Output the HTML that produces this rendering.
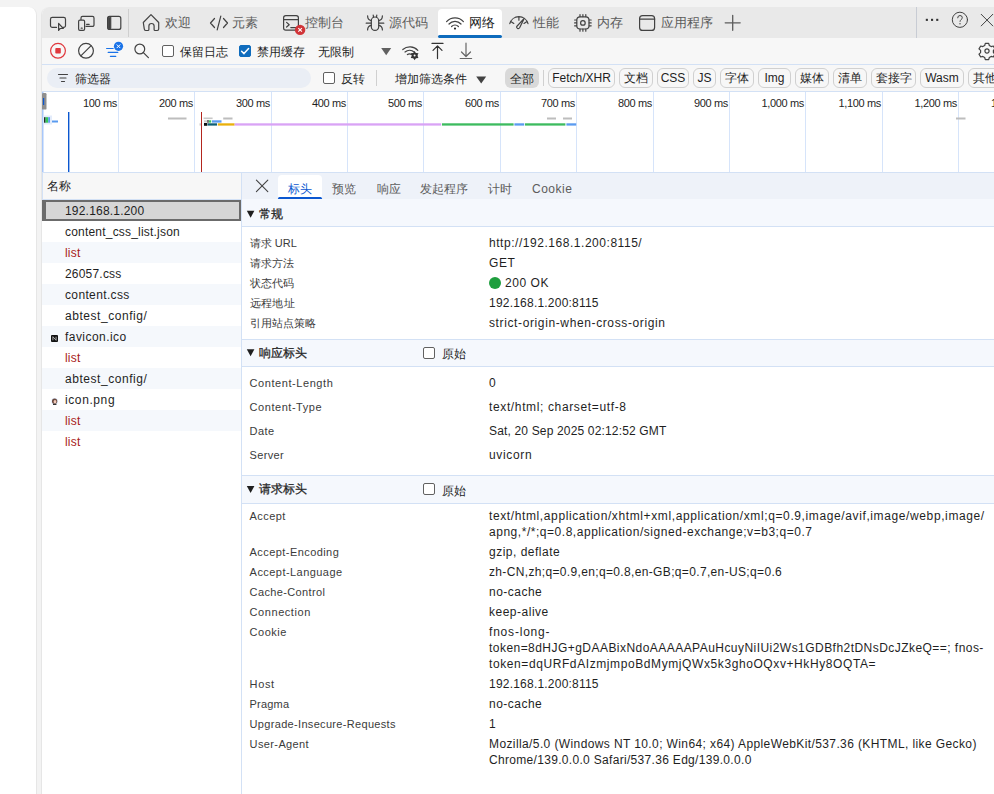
<!DOCTYPE html>
<html><head><meta charset="utf-8">
<style>
*{box-sizing:border-box;margin:0;padding:0}
html,body{width:994px;height:794px;overflow:hidden;background:#f3f3f3;font-family:"Liberation Sans",sans-serif;font-size:12px;color:#1f1f1f;position:relative}
.a{position:absolute}
.t{position:absolute;white-space:nowrap;line-height:14px}
svg{position:absolute;overflow:visible}
.tab{color:#5c5c5c;font-size:13px}
.chip{position:absolute;top:68px;height:20px;border:1px solid #d0d0d0;border-radius:6px;line-height:18px;text-align:center;color:#1f1f1f;font-size:12px}
.cb{position:absolute;width:12px;height:12px;border:1px solid #616161;border-radius:2px;background:#fff}
.gl{position:absolute;top:92px;width:1px;height:80px;background:#d6e4fa}
.ms{position:absolute;top:97px;font-size:11px;letter-spacing:-.35px;text-align:right;width:60px;color:#1f1f1f;line-height:12px}
.row{position:absolute;left:42px;width:199px;height:21px}
.row.e{background:#f5f8fc}
.rn{position:absolute;left:23px;top:4px;white-space:nowrap;line-height:14px;letter-spacing:.2px}
.red{color:#a8201a}
.lbl{position:absolute;left:249.6px;font-size:11px;color:#3b3b3b;white-space:nowrap;letter-spacing:.45px;line-height:14px}
.val{position:absolute;left:489px;color:#1f1f1f;white-space:nowrap;letter-spacing:.55px;line-height:16px}
.sec{position:absolute;left:242px;width:752px;background:#f5f8fd;border-top:1px solid #d3e1f5;border-bottom:1px solid #d3e1f5}
</style></head><body>
<!-- panels -->
<div class="a" style="left:0;top:7px;width:37px;height:790px;background:#fff;border-top-right-radius:8px;border-right:1px solid #e6e6e6"></div>
<div class="a" style="left:41px;top:7px;width:960px;height:790px;background:#fff;border-top-left-radius:8px;border-left:1px solid #e6e6e6;overflow:hidden">
  <div class="a" style="left:0;top:0;width:960px;height:31px;background:#e9e9e9"></div>
  <div class="a" style="left:0;top:31px;width:960px;height:27px;background:#f7f7f7;border-bottom:1px solid #d3e1f5"></div>
  <div class="a" style="left:0;top:58px;width:960px;height:27px;background:#f7f7f7;border-bottom:1px solid #d3e1f5"></div>
  <div class="a" style="left:0;top:85px;width:960px;height:81px;background:#fff;border-bottom:1px solid #d3e1f5"></div>
  <div class="a" style="left:0;top:166px;width:200px;height:27px;background:#f7f7f7;border-bottom:1px solid #d3e1f5"></div>
  <div class="a" style="left:200px;top:166px;width:760px;height:27px;background:#eef2f9;border-bottom:1px solid #d3e1f5"></div>
</div>
<div class="a" style="left:241px;top:172px;width:1px;height:630px;background:#d3e1f5"></div>

<!-- tabbar -->
<div class="a" style="left:438px;top:9px;width:64px;height:29px;background:#fff;border-radius:4px 4px 0 0"></div>
<svg style="left:0;top:0" width="994" height="40" fill="none" stroke="#424242" stroke-width="1.2" stroke-linecap="round" stroke-linejoin="round">
  <path d="M56.5 27.4H52.3a1.8 1.8 0 0 1-1.8-1.8V19.2a1.8 1.8 0 0 1 1.8-1.8h11.4a1.8 1.8 0 0 1 1.8 1.8v6.4a1.8 1.8 0 0 1-1.8 1.8H63"/>
  <path d="M58.6 23.4v7l1.6-1.9h3.1z"/>
  <path d="M81 19.5v-1.6a1.5 1.5 0 0 1 1.5-1.5h10a1.5 1.5 0 0 1 1.5 1.5v7a1.5 1.5 0 0 1-1.5 1.5h-6.5"/>
  <rect x="78.6" y="20.2" width="6" height="10.2" rx="1.3"/>
  <path d="M81.2 28.2h1"/><path d="M86.6 24.3h2.6"/>
  <rect x="107.6" y="16.4" width="13.2" height="13" rx="2"/>
  <path d="M108.2 17.2v11.4h2.6V17.2z" fill="#424242" stroke-width="1"/>
  <path d="M143.3 22.5L151 14.6l7.7 7.9v6.6a1.4 1.4 0 0 1-1.4 1.4h-2.2a1 1 0 0 1-1-1v-3.4a2.6 2.6 0 0 0-5.2 0v3.4a1 1 0 0 1-1 1h-2.2a1.4 1.4 0 0 1-1.4-1.4z"/>
  <path d="M214.5 18.5l-4 4.5 4 4.5M223.5 18.5l4 4.5-4 4.5M220.8 16.2l-3.6 13.6"/>
  <rect x="283.6" y="15.6" width="14.8" height="14.6" rx="2.2"/>
  <path d="M283.6 19.6h14.8"/>
  <path d="M286.6 22.4l2.6 2.3-2.6 2.3M290.8 27.6h5"/>
  <!-- bug -->
  <rect x="371.3" y="17" width="7.4" height="13.4" rx="3.7"/>
  <path d="M373.5 17.2l-.3-2.2M376.5 17.2l.3-2.2M371.2 20.6c-2.4-.4-3.6-2-3.6-4.8M378.8 20.6c2.4-.4 3.6-2 3.6-4.8M371 23.2h-4.8M379 23.2h4.8M371.2 25.4c-2.4.4-3.6 2-3.6 4.6M378.8 25.4c2.4.4 3.6 2 3.6 4.6"/>
  <!-- wifi -->
  <path d="M446.6 21.6a11.5 11.5 0 0 1 16.8 0M449 24a8 8 0 0 1 12 0M451.6 26.5a4.6 4.6 0 0 1 6.8 0"/>
  <circle cx="455" cy="28.6" r="1.1" fill="#242424" stroke="none"/>
  <!-- perf -->
  <path d="M509.8 23.6A9.45 9.45 0 0 1 528 23.6M510.8 21.4l3 2M518.9 16.6v3.6M527 21.4l-3 2"/>
  <path d="M524.2 18.4l-4.6 9.4a1.6 1.6 0 0 1-2.9-1.3z"/>
  <!-- memory -->
  <rect x="576.8" y="16.8" width="12.2" height="12.2" rx="3.2"/>
  <circle cx="582.9" cy="22.9" r="2.3"/>
  <path d="M580 14.6v2M582.9 14.6v2M585.8 14.6v2M580 29.2v2M582.9 29.2v2M585.8 29.2v2M574.6 20h2M574.6 22.9h2M574.6 25.8h2M589.2 20h2M589.2 22.9h2M589.2 25.8h2"/>
  <!-- app -->
  <rect x="639.6" y="15.6" width="15" height="14.8" rx="3"/>
  <path d="M639.6 19.2h15"/>
  <path d="M725.2 22.8h15M732.7 15.3v15" stroke="#5c5c5c" stroke-width="1.3"/>
  <!-- right -->
  <rect x="925.8" y="18.8" width="2.1" height="2.1" fill="#333" stroke="none"/><rect x="931" y="18.8" width="2.1" height="2.1" fill="#333" stroke="none"/><rect x="936.2" y="18.8" width="2.1" height="2.1" fill="#333" stroke="none"/>
  <circle cx="959.9" cy="19.8" r="7.6" stroke-width="1"/>
  <path d="M957.7 17.8a2.3 2.3 0 0 1 4.6 0c0 1.6-2.3 1.8-2.3 3.6" stroke-width="1"/><circle cx="960" cy="23.7" r=".7" fill="#424242" stroke="none"/>
  <path d="M981.2 14.3l11.6 11.6M992.8 14.3l-11.6 11.6" stroke-width="1"/>
</svg>
<div class="a" style="left:128px;top:9px;width:1px;height:28px;background:#cfcfcf"></div>
<div class="a" style="left:916px;top:7px;width:1px;height:31px;background:#c8ccd4"></div>
<div class="a" style="left:438px;top:35px;width:64px;height:3px;background:#0f6cbd;border-radius:2px"></div>
<div class="t tab" style="top:16px;left:165px">欢迎</div>
<div class="t tab" style="top:16px;left:232px">元素</div>
<div class="t tab" style="top:16px;left:305px">控制台</div>
<div class="t tab" style="top:16px;left:389px">源代码</div>
<div class="t tab" style="top:16px;left:469px;color:#1f1f1f">网络</div>
<div class="t tab" style="top:16px;left:533px">性能</div>
<div class="t tab" style="top:16px;left:597px">内存</div>
<div class="t tab" style="top:16px;left:661px">应用程序</div>
<svg style="left:0;top:0" width="320" height="40"><circle cx="300.1" cy="29.9" r="5.2" fill="#d13438"/><path d="M298.3 28.1l3.6 3.6M301.9 28.1l-3.6 3.6" stroke="#fff" stroke-width="1.1"/></svg>

<!-- toolbar row1 -->
<svg style="left:0;top:0" width="994" height="100" fill="none" stroke="#424242" stroke-width="1.2" stroke-linecap="round" stroke-linejoin="round">
  <circle cx="58" cy="50.8" r="7.4" stroke="#e0393e"/>
  <rect x="55.3" y="48.1" width="5.5" height="5.5" rx=".8" fill="#e0393e" stroke="none"/>
  <circle cx="86" cy="50.8" r="7.4"/>
  <path d="M90.9 45.9l-9.8 9.8"/>
  <path d="M106.6 48.5h6.6M108.2 52.4h9.6M110.4 56.3h5.4" stroke="#1a73e8"/>
  <circle cx="118.5" cy="46.3" r="4.6" fill="#1a73e8" stroke="none"/>
  <path d="M117 44.8l3 3M120 44.8l-3 3" stroke="#fff" stroke-width="1"/>
  <circle cx="139.8" cy="49" r="4.9"/>
  <path d="M143.4 52.6l5 5"/>
  <path d="M381.2 48h10l-5 7.2z" fill="#616161" stroke="none"/>
  <path d="M402.8 49.5a11 11 0 0 1 15 .8M405 52a7.4 7.4 0 0 1 9.4.2M407.4 54.6a3.6 3.6 0 0 1 4-.2" stroke="#424242"/>
  <path d="M432 43.4h11M437.5 46v12.6M433 50.3l4.5-4.5 4.5 4.5" stroke="#333"/>
  <path d="M460.2 58.5h11.4M466 43.2v13M461.5 52l4.5 4.5 4.5-4.5" stroke="#666"/>
  <g transform="translate(987 51)"><path d="M-1.7-7.6h3.4l.6 2.1 1.9 1.1 2.1-.6 1.7 2.9-1.6 1.5v2.2l1.6 1.5-1.7 2.9-2.1-.6-1.9 1.1-.6 2.1h-3.4l-.6-2.1-1.9-1.1-2.1.6-1.7-2.9 1.6-1.5v-2.2l-1.6-1.5 1.7-2.9 2.1.6 1.9-1.1z"/><circle r="2.1"/></g>
</svg>
<svg style="left:0;top:0" width="994" height="100"><g transform="translate(414.6 55.6)"><circle r="2.9" fill="#333"/><path d="M0-4.6L1.2-2.6 3.9-2.3 2.6 0 3.9 2.3 1.2 2.6 0 4.6-1.2 2.6-3.9 2.3-2.6 0-3.9-2.3-1.2-2.6z" fill="#333"/><circle r="1" fill="#f7f7f7"/></g></svg>
<div class="cb" style="left:162px;top:45px"></div>
<div class="t" style="left:180px;top:45px;color:#1f1f1f">保留日志</div>
<div class="cb" style="left:239px;top:45px;background:#0f6cbd;border-color:#0f6cbd"></div>
<svg style="left:0;top:0" width="300" height="70"><path d="M241.6 51.2l2.4 2.4 4.6-5" fill="none" stroke="#fff" stroke-width="1.5" stroke-linecap="round" stroke-linejoin="round"/></svg>
<div class="t" style="left:257px;top:45px;color:#1f1f1f">禁用缓存</div>
<div class="t" style="left:318px;top:45px;color:#1f1f1f">无限制</div>
<!-- filter row -->
<div class="a" style="left:47px;top:68px;width:264px;height:20px;background:#eaeef5;border-radius:10px"></div>
<svg style="left:0;top:0" width="994" height="100" fill="none" stroke="#424242" stroke-width="1.2" stroke-linecap="round">
  <path d="M58.5 74.5h9M60 78h6M61.5 81.5h3"/>
  <path d="M476.2 76.4h10l-5 7.2z" fill="#424242" stroke="none"/>
</svg>
<div class="t" style="left:75px;top:72px;color:#1f1f1f">筛选器</div>
<div class="cb" style="left:323px;top:72px"></div>
<div class="t" style="left:341px;top:72px;color:#1f1f1f">反转</div>
<div class="a" style="left:376px;top:70px;width:1px;height:16px;background:#d0d0d0"></div>
<div class="t" style="left:395px;top:72px;color:#1f1f1f">增加筛选条件</div>
<div class="a" style="left:505px;top:68px;width:34px;height:20px;background:#d9d9d9;border-radius:6px"></div>
<div class="t" style="left:510px;top:72px;color:#1f1f1f">全部</div>
<div class="a" style="left:543px;top:70px;width:1px;height:16px;background:#d0d0d0"></div>
<div class="chip" style="left:548px;width:67px">Fetch/XHR</div>
<div class="chip" style="left:619px;width:34px">文档</div>
<div class="chip" style="left:657px;width:32px">CSS</div>
<div class="chip" style="left:693px;width:23px">JS</div>
<div class="chip" style="left:720px;width:34px">字体</div>
<div class="chip" style="left:758px;width:33px">Img</div>
<div class="chip" style="left:795px;width:34px">媒体</div>
<div class="chip" style="left:833px;width:34px">清单</div>
<div class="chip" style="left:871px;width:45px">套接字</div>
<div class="chip" style="left:920px;width:44px">Wasm</div>
<div class="chip" style="left:968px;width:34px;text-align:left;padding-left:4px">其他</div>

<!-- overview -->
<div class="gl" style="left:118px"></div><div class="gl" style="left:194px"></div><div class="gl" style="left:271px"></div><div class="gl" style="left:347px"></div><div class="gl" style="left:423px"></div><div class="gl" style="left:500px"></div><div class="gl" style="left:576px"></div><div class="gl" style="left:653px"></div><div class="gl" style="left:729px"></div><div class="gl" style="left:805px"></div><div class="gl" style="left:882px"></div><div class="gl" style="left:958px"></div>
<div class="ms" style="left:57px">100 ms</div><div class="ms" style="left:133px">200 ms</div><div class="ms" style="left:210px">300 ms</div><div class="ms" style="left:286px">400 ms</div><div class="ms" style="left:362px">500 ms</div><div class="ms" style="left:439px">600 ms</div><div class="ms" style="left:515px">700 ms</div><div class="ms" style="left:592px">800 ms</div><div class="ms" style="left:668px">900 ms</div><div class="ms" style="left:744px">1,000 ms</div><div class="ms" style="left:821px">1,100 ms</div><div class="ms" style="left:897px">1,200 ms</div><div class="ms" style="left:991px;text-align:left">1,300 ms</div>
<svg style="left:0;top:0" width="994" height="180">
  <rect x="42" y="92" width="1.5" height="80" fill="#a8c7fa"/>
  <rect x="42" y="93" width="4.5" height="16.6" rx="1.2" fill="#8f8f8f"/>
  <rect x="43" y="98" width="1.2" height="7" fill="#0b57d0"/>
  <rect x="43.5" y="115.5" width="8.5" height="9" fill="#e3ecfb"/>
  <rect x="44" y="117.2" width="1.6" height="5.5" fill="#1f2d2a"/>
  <rect x="45.6" y="117.2" width="2.6" height="5.5" fill="#34c759"/>
  <rect x="48.2" y="117.2" width="1.8" height="5.5" fill="#5a9bf0"/>
  <rect x="52" y="120.5" width="6" height="2" fill="#5a9bf0"/>
  <rect x="68" y="112" width="1.4" height="60" fill="#0b57d0"/>
  <rect x="168" y="117.5" width="18.5" height="2" fill="#bdbdbd"/>
  <rect x="203.6" y="117.5" width="9" height="1.6" fill="#c8c8c8"/>
  <rect x="223.2" y="117.5" width="9.3" height="2" fill="#bdbdbd"/>
  <rect x="204" y="120.3" width="3" height="2.2" fill="#cfcfcf"/>
  <rect x="207.4" y="120" width="1.2" height="2.8" fill="#222"/>
  <rect x="209" y="120.3" width="2.2" height="2.3" fill="#34c759"/>
  <rect x="212" y="120.3" width="9.5" height="2.3" fill="#5a9bf0"/>
  <rect x="199.5" y="123.3" width="2" height="2.3" fill="#cfcfcf"/>
  <rect x="204" y="123" width="3.2" height="2.8" fill="#111"/>
  <rect x="207.5" y="123.3" width="9.5" height="2.3" fill="#0e5f76"/>
  <rect x="217.8" y="123.3" width="16.8" height="2.3" fill="#e9b00c"/>
  <rect x="234.6" y="123.3" width="206.6" height="2.3" fill="#d9a3f5"/>
  <rect x="442" y="123.3" width="71.6" height="2.3" fill="#3dbb5f"/>
  <rect x="514.4" y="123.3" width="9.8" height="2.3" fill="#5a9bf0"/>
  <rect x="525" y="123.3" width="40.4" height="2.3" fill="#3dbb5f"/>
  <rect x="566.4" y="123.3" width="9.8" height="2.3" fill="#5a9bf0"/>
  <rect x="547" y="117.5" width="9" height="2" fill="#bdbdbd"/>
  <rect x="563" y="117.5" width="9" height="2" fill="#bdbdbd"/>
  <rect x="956" y="117.5" width="9.5" height="2" fill="#bdbdbd"/>
  <rect x="201" y="112" width="1" height="60" fill="#b3261e"/>
</svg>

<!-- list -->
<div class="a" style="left:42px;top:172px;width:1px;height:28px;background:#d3e1f5"></div><div class="t" style="left:47px;top:179px;color:#1f1f1f">名称</div>
<div class="row" style="top:200px"><div class="rn ">192.168.1.200</div></div>
<div class="row" style="top:221px"><div class="rn ">content_css_list.json</div></div>
<div class="row e" style="top:242px"><div class="rn red">list</div></div>
<div class="row" style="top:263px"><div class="rn ">26057.css</div></div>
<div class="row e" style="top:284px"><div class="rn " style="letter-spacing:0.36px">content.css</div></div>
<div class="row" style="top:305px"><div class="rn " style="letter-spacing:0.55px">abtest_config/</div></div>
<div class="row e" style="top:326px"><div class="rn " style="letter-spacing:0.45px">favicon.ico</div></div>
<div class="row" style="top:347px"><div class="rn red">list</div></div>
<div class="row e" style="top:368px"><div class="rn " style="letter-spacing:0.55px">abtest_config/</div></div>
<div class="row" style="top:389px"><div class="rn " style="letter-spacing:0.6px">icon.png</div></div>
<div class="row e" style="top:410px"><div class="rn red">list</div></div>
<div class="row" style="top:431px"><div class="rn red">list</div></div>
<div class="a" style="left:42px;top:200px;width:199px;height:21px;background:#d6d6d6;border:2px solid #6b6b6b;border-left-width:4px"></div><div class="t" style="left:65px;top:204px;letter-spacing:.2px">192.168.1.200</div>
<svg style="left:0;top:0" width="100" height="420">
<rect x="51" y="335" width="7" height="7" rx="1" fill="#111"/><path d="M52.9 340.3v-3.6l3.2 3.6v-3.6" stroke="#bbb" stroke-width=".9" fill="none"/>
<circle cx="54.6" cy="401.4" r="3.3" fill="#dce8fb"/><circle cx="54.6" cy="401.2" r="2.6" fill="#6b4a3e"/><ellipse cx="55" cy="401.8" rx="1.4" ry="1.8" fill="#f2c9b8"/><rect x="53" y="403.8" width="3.4" height="1.2" fill="#333"/>
</svg>

<!-- details -->
<svg style="left:0;top:0" width="994" height="230" fill="none" stroke="#424242" stroke-width="1.1" stroke-linecap="round">
<path d="M256.4 180.2l11.4 11.4M267.8 180.2l-11.4 11.4"/>
</svg>
<div class="a" style="left:278px;top:175px;width:44px;height:24px;background:#fff;border-radius:4px 4px 0 0"></div>
<div class="a" style="left:278px;top:197px;width:44px;height:3px;background:#0b57d0;border-radius:2px"></div>
<div class="t" style="left:288px;top:182px;color:#0b57d0">标头</div>
<div class="t" style="left:332px;top:182px;color:#5c5c5c">预览</div>
<div class="t" style="left:377px;top:182px;color:#5c5c5c">响应</div>
<div class="t" style="left:420px;top:182px;color:#5c5c5c">发起程序</div>
<div class="t" style="left:488px;top:182px;color:#5c5c5c">计时</div>
<div class="t" style="left:532px;top:182px;color:#5c5c5c;letter-spacing:.5px">Cookie</div>
<div class="sec" style="top:199px;height:28px;border-top:none"></div>
<div class="sec" style="top:339px;height:28px"></div>
<div class="sec" style="top:475px;height:29px"></div>
<svg style="left:0;top:0" width="994" height="500"><path d="M246.8 210.8h7.6l-3.8 7z" fill="#1f1f1f"/><path d="M246.8 349.3h7.6l-3.8 7z" fill="#1f1f1f"/><path d="M246.8 486h7.6l-3.8 7z" fill="#1f1f1f"/></svg>
<div class="t" style="left:259px;top:207px;-webkit-text-stroke:.25px #1f1f1f">常规</div>
<div class="t" style="left:259px;top:346px;-webkit-text-stroke:.25px #1f1f1f">响应标头</div>
<div class="t" style="left:259px;top:482px;-webkit-text-stroke:.25px #1f1f1f">请求标头</div>
<div class="cb" style="left:423px;top:347px"></div><div class="t" style="left:442px;top:347px">原始</div>
<div class="cb" style="left:423px;top:483px"></div><div class="t" style="left:442px;top:484px">原始</div>
<div class="lbl" style="top:236px;letter-spacing:0.05px">请求 URL</div><div class="val" style="top:235px;letter-spacing:0.538px">http://192.168.1.200:8115/</div>
<div class="lbl" style="top:256px;letter-spacing:0.117px">请求方法</div><div class="val" style="top:255px">GET</div>
<div class="lbl" style="top:276px;letter-spacing:0.117px">状态代码</div><div class="val" style="top:275px"><span style="display:inline-block;width:12px;height:12px;border-radius:6px;background:#1e9e3e;vertical-align:-2px;margin-right:4px"></span>200 OK</div>
<div class="lbl" style="top:296px;letter-spacing:0.45px">远程地址</div><div class="val" style="top:295px;letter-spacing:0.215px">192.168.1.200:8115</div>
<div class="lbl" style="top:316px;letter-spacing:0.15px">引用站点策略</div><div class="val" style="top:315px;letter-spacing:0.62px">strict-origin-when-cross-origin</div>
<div class="lbl" style="top:376px;letter-spacing:0.565px">Content-Length</div><div class="val" style="top:375px">0</div>
<div class="lbl" style="top:400px;letter-spacing:0.541px">Content-Type</div><div class="val" style="top:399px;letter-spacing:0.633px">text/html; charset=utf-8</div>
<div class="lbl" style="top:424px;letter-spacing:0.45px">Date</div><div class="val" style="top:423px;letter-spacing:0.161px">Sat, 20 Sep 2025 02:12:52 GMT</div>
<div class="lbl" style="top:448px;letter-spacing:0.31px">Server</div><div class="val" style="top:447px;letter-spacing:0.667px">uvicorn</div>
<div class="lbl" style="top:509px;letter-spacing:0.41px">Accept</div><div class="val" style="top:508px;letter-spacing:0.613px">text/html,application/xhtml+xml,application/xml;q=0.9,image/avif,image/webp,image/</div><div class="val" style="top:524px;letter-spacing:0.533px">apng,*/*;q=0.8,application/signed-exchange;v=b3;q=0.7</div>
<div class="lbl" style="top:545px;letter-spacing:0.429px">Accept-Encoding</div><div class="val" style="top:544px;letter-spacing:0.5px">gzip, deflate</div>
<div class="lbl" style="top:565px;letter-spacing:0.45px">Accept-Language</div><div class="val" style="top:564px;letter-spacing:0.346px">zh-CN,zh;q=0.9,en;q=0.8,en-GB;q=0.7,en-US;q=0.6</div>
<div class="lbl" style="top:585px;letter-spacing:0.375px">Cache-Control</div><div class="val" style="top:584px;letter-spacing:0.479px">no-cache</div>
<div class="lbl" style="top:605px;letter-spacing:0.561px">Connection</div><div class="val" style="top:604px;letter-spacing:0.506px">keep-alive</div>
<div class="lbl" style="top:625px;letter-spacing:0.49px">Cookie</div><div class="val" style="top:624px;letter-spacing:0.8px">fnos-long-</div><div class="val" style="top:640px;letter-spacing:0.457px">token=8dHJG+gDAABixNdoAAAAAPAuHcuyNiIUi2Ws1GDBfh2tDNsDcJZkeQ==; fnos-</div><div class="val" style="top:656px;letter-spacing:0.591px">token=dqURFdAIzmjmpoBdMymjQWx5k3ghoOQxv+HkHy8OQTA=</div>
<div class="lbl" style="top:677px;letter-spacing:0.65px">Host</div><div class="val" style="top:676px;letter-spacing:0.215px">192.168.1.200:8115</div>
<div class="lbl" style="top:697px;letter-spacing:0.19px">Pragma</div><div class="val" style="top:696px;letter-spacing:0.479px">no-cache</div>
<div class="lbl" style="top:717px;letter-spacing:0.321px">Upgrade-Insecure-Requests</div><div class="val" style="top:716px">1</div>
<div class="lbl" style="top:737px;letter-spacing:0.383px">User-Agent</div><div class="val" style="top:736px;letter-spacing:0.392px">Mozilla/5.0 (Windows NT 10.0; Win64; x64) AppleWebKit/537.36 (KHTML, like Gecko)</div><div class="val" style="top:752px;letter-spacing:0.313px">Chrome/139.0.0.0 Safari/537.36 Edg/139.0.0.0</div>
</body></html>
